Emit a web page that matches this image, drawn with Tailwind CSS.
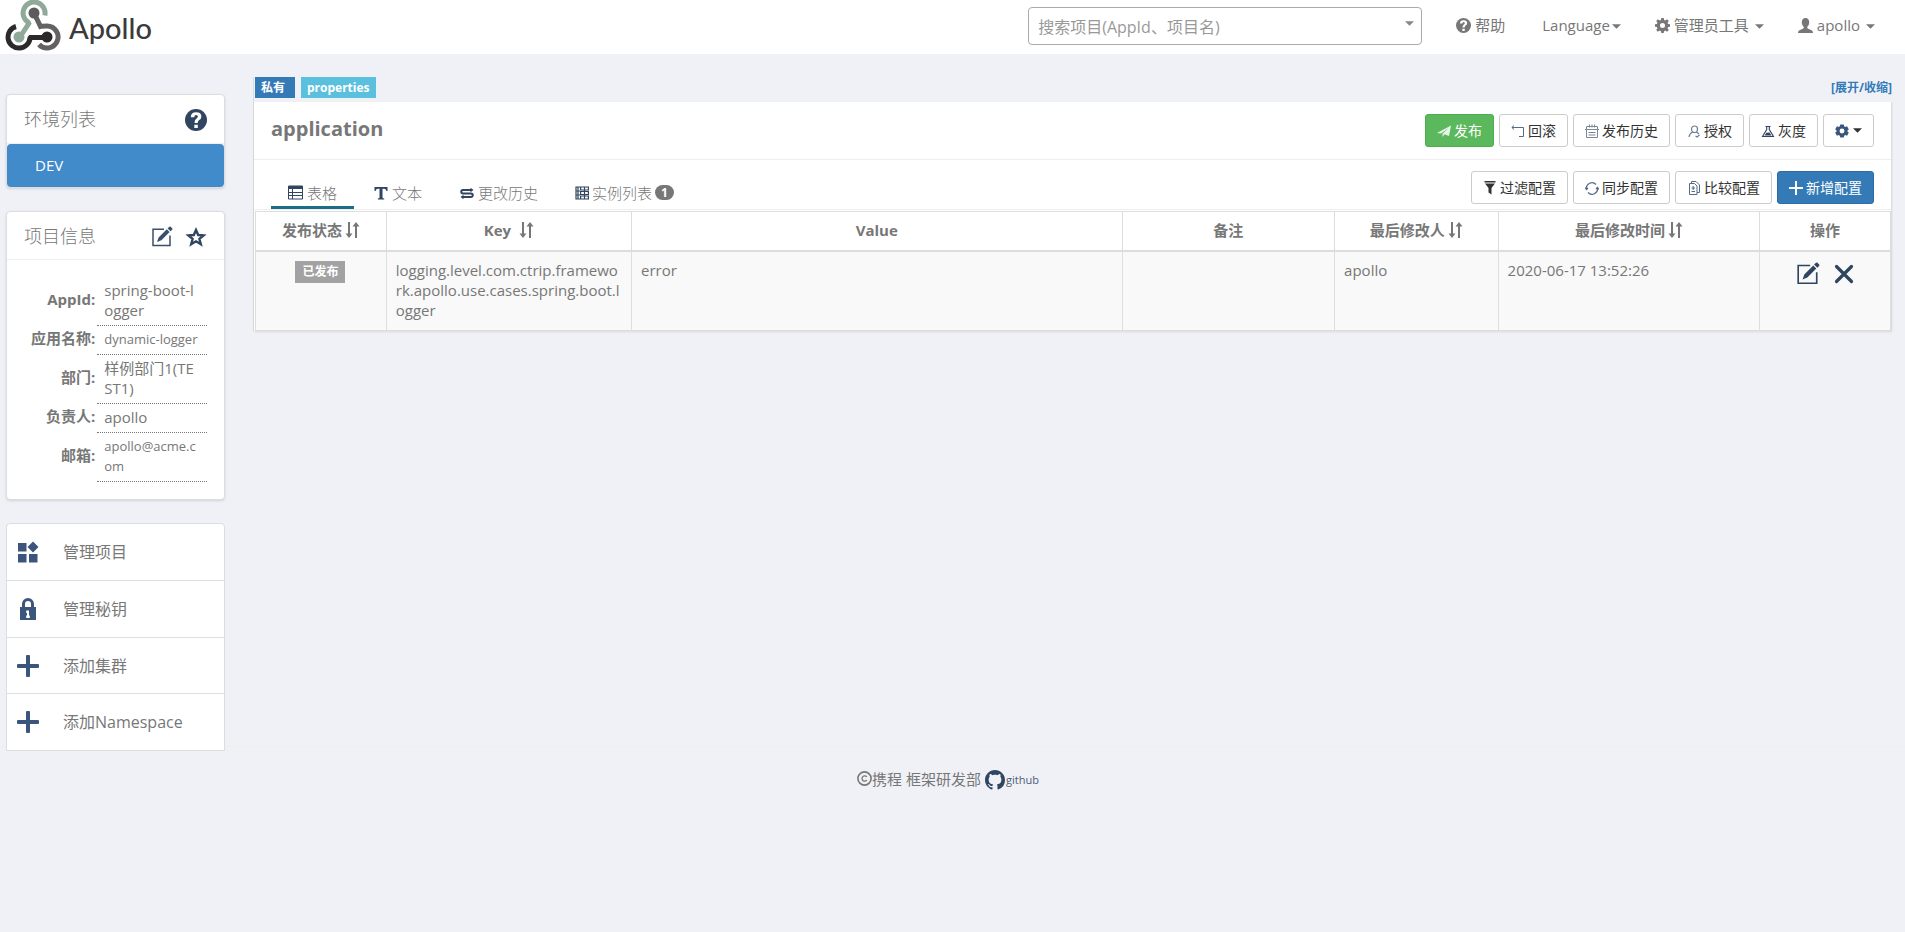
<!DOCTYPE html>
<html lang="zh-CN">
<head>
<meta charset="utf-8">
<meta name="viewport" content="width=device-width, initial-scale=1">
<title>Apollo</title>
<script src="https://cdn.jsdelivr.net/npm/@tailwindcss/browser@4"></script>
</head>
<body class="min-h-screen bg-[#f0f1f7] font-['Open_Sans','Noto_Sans_CJK_SC',sans-serif] text-[15px] leading-5 text-[#777]">

<svg class="hidden" aria-hidden="true">
  <symbol id="edit" viewBox="0 0 22 22"><path d="M13 3.2H2v16.3h17V9.5" fill="none" stroke="currentColor" stroke-width="1.5"/><path d="M6 16l1.6-4.6 8.2-8.2 2.8 2.8-8.2 8.3zM16.600 2.400L18.300 .8q.7-.5 1.400 0l1.500 1.500q.6.7 0 1.400l-1.700 1.600z" fill="currentColor"/></symbol>
  <symbol id="caret" viewBox="0 0 8 4"><path d="M0 0h8L4 4z" fill="currentColor"/></symbol>
  <symbol id="sort" viewBox="0 0 15 16"><path d="M3 0h2v11.500h2.500L4 16 .5 11.500H3zM10 16h2V4.500h2.500L11 0 7.500 4.500H10z" fill="currentColor"/></symbol>
  <symbol id="plus" viewBox="0 0 22 22"><path d="M10 0h2q1 0 1 1v8h8q1 0 1 1v2q0 1-1 1h-8v8q0 1-1 1h-2q-1 0-1-1v-8H1q-1 0-1-1v-2q0-1 1-1h8V1q0-1 1-1z" fill="currentColor"/></symbol>
  <symbol id="gear" viewBox="0 0 16 16"><path fill="currentColor" fill-rule="evenodd" d="M6.700 0h2.600l.4 2.100 1.300.6 1.900-1.300 1.800 1.800-1.300 1.900.6 1.300 2 .3v2.600l-2 .4-.6 1.300 1.300 1.900-1.800 1.800-1.900-1.300-1.300.6-.4 2H6.700l-.4-2-1.300-.6-1.900 1.300-1.800-1.800L2.600 11 2 9.700 0 9.300V6.700l2-.4L2.600 5 1.300 3.200l1.800-1.800L5 2.700l1.300-.6zM8 5.300a2.700 2.700 0 100 5.400 2.700 2.700 0 000-5.400z"/></symbol>
  <symbol id="cog" viewBox="0 0 16 16"><path fill="currentColor" fill-rule="evenodd" d="M6 .5h4l.5 2.200 1.200.7 2.100-.7 2 3.500L14.200 7.500v1l1.600 1.300-2 3.500-2.100-.7-1.200.7-.5 2.200H6l-.5-2.200-1.200-.7-2.100.7-2-3.500 1.600-1.300v-1L.2 6.200l2-3.500 2.100.7 1.200-.7zM8 5.200a2.800 2.800 0 100 5.600 2.800 2.800 0 000-5.600z"/></symbol>
  <symbol id="help" viewBox="0 0 22 22"><circle cx="11" cy="11" r="11" fill="currentColor"/><path d="M5.800 8.200q0-5 5.300-5 5.300 0 5.300 4.300 0 2.300-2.200 3.600-1.500 1-1.500 2.900H9.500q0-3 2-4.400 1.400-.9 1.400-2 0-1.600-1.800-1.600-1.800 0-1.900 2.200zM9.300 15.700h3.500v3.400H9.300z" fill="#fff"/></symbol>
</svg>

<header class="flex h-[54px] items-start justify-between bg-white">
  <a href="#" class="flex items-center pl-[5px] text-[#3c3a3a]">
    <svg class="h-[52px] w-[57px]" viewBox="5 0 57 52" fill="none" stroke-width="5">
      <path d="M16 26.500A11 11 0 1 0 30 38l.5-.6h14" stroke="#2b2929"/>
      <path d="M34 13l6.500 13.500Q42 26 47 26A11 11 0 1 1 39 44.500" stroke="#636161"/>
      <path d="M44.800 15.500A11 11 0 1 0 28.300 22.400l.5 1.200L20 37" stroke="#8faa98"/>
      <circle cx="34" cy="13" r="5.500" fill="#5d5b5b"/><circle cx="19" cy="37" r="5.500" fill="#8faa98"/><circle cx="47" cy="37" r="5.500" fill="#2b2929"/>
    </svg>
    <span class="pt-1 pl-[7px] font-['Lato',sans-serif] text-[29px] leading-9 font-medium">Apollo</span>
  </a>
  <nav class="flex items-start pr-[30px]">
    <div class="relative mt-[7px] mr-[34px]">
      <select aria-label="搜索项目" class="h-[38px] w-[394px] appearance-none rounded border border-[#aaa] bg-white pt-[2px] pl-[9px] text-base text-[#999]"><option>搜索项目(AppId、项目名)</option></select>
      <svg class="pointer-events-none absolute top-[14px] right-2 h-[5px] w-[9px] text-[#888]"><use href="#caret"/></svg>
    </div>
    <ul class="flex items-center gap-[38px] pt-[15px]">
      <li><a href="#" class="flex items-center gap-1"><svg class="size-[15px]"><use href="#help"/></svg>帮助</a></li>
      <li class="-ml-px"><a href="#" class="flex items-center gap-[2px]">Language<svg class="mt-[2px] h-[5px] w-[9px]"><use href="#caret"/></svg></a></li>
      <li class="-ml-1"><a href="#" class="flex items-center gap-1"><svg class="size-[15px]"><use href="#gear"/></svg>管理员工具<svg class="mt-[2px] ml-[2px] h-[5px] w-[9px]"><use href="#caret"/></svg></a></li>
      <li class="-ml-1"><a href="#" class="flex items-center gap-1"><svg class="size-[15px]" viewBox="0 0 15 15" fill="currentColor"><path d="M7.500 0C10 0 11.200 1.800 11.200 4.200c0 2-.8 3.700-1.900 4.600v1.400l4.600 2.300q1.100.6 1.100 2.500H0q0-1.900 1.100-2.500l4.600-2.300V8.800C4.600 7.900 3.800 6.200 3.800 4.200 3.800 1.800 5 0 7.500 0z"/></svg>apollo<svg class="mt-[2px] ml-[2px] h-[5px] w-[9px]"><use href="#caret"/></svg></a></li>
    </ul>
  </nav>
</header>

<div class="flex items-start gap-[28px] pr-[13px] pl-[6px]">
  <aside class="w-[219px] shrink-0 pt-10">
    <section class="rounded border border-[#ddd] bg-white shadow-sm">
      <header class="flex h-[49px] items-center justify-between border-b border-[#eee] px-[17px]">
        <h2 class="text-lg font-light">环境列表</h2>
        <button type="button" aria-label="帮助" class="text-[#30455f]"><svg class="mt-[2px] size-[22px]"><use href="#help"/></svg></button>
      </header>
      <a href="#" class="flex h-[43px] items-center rounded bg-[#428bca] pb-[2px] pl-7 text-white">DEV</a>
    </section>

    <section class="mt-[23px] rounded border border-[#ddd] bg-white shadow-sm">
      <header class="flex h-[48px] items-center border-b border-[#eee] px-[17px]">
        <h2 class="grow text-lg font-light">项目信息</h2>
        <button type="button" aria-label="编辑" class="mr-3 text-[#3a4f6b]"><svg class="mt-[2px] size-[22px]"><use href="#edit"/></svg></button>
        <button type="button" aria-label="收藏" class="text-[#30455f]"><svg class="mt-[2px] size-[22px]" viewBox="0 0 22 22" fill="none" stroke="currentColor" stroke-width="2.400"><path d="M11 4l2.200 5 5.400.4-4.200 3.500 1.400 5.300L11 15.300l-4.800 2.900 1.400-5.300-4.200-3.500L8.800 9z"/></svg></button>
      </header>
      <table class="mx-[17px] mt-[17px] mb-[17px] table-fixed [&_td]:border-b [&_td]:border-dotted [&_td]:border-[#777] [&_td]:px-[7px] [&_td]:pt-[3px] [&_td]:pb-[5px] [&_th]:pr-[2px] [&_th]:pb-1 [&_th]:text-right [&_th]:font-bold">
        <tbody>
          <tr><th class="w-[74px]">AppId:</th><td class="w-[110px] break-all">spring-boot-logger</td></tr>
          <tr><th class="whitespace-nowrap">应用名称:</th><td class="text-[13px] leading-5 whitespace-nowrap">dynamic-logger</td></tr>
          <tr><th>部门:</th><td class="break-all">样例部门1(TEST1)</td></tr>
          <tr><th>负责人:</th><td class="break-all">apollo</td></tr>
          <tr><th>邮箱:</th><td class="text-[13px] leading-5 break-all">apollo@acme.com</td></tr>
        </tbody>
      </table>
    </section>

    <nav class="mt-[23px] divide-y divide-[#ddd] rounded-t border border-[#ddd] bg-white text-base">
      <a href="#" class="flex h-[57px] items-center pl-[10px]"><svg class="mr-[24px] size-[22px] text-[#3a567c]" viewBox="0 0 22 22" fill="currentColor"><path d="M1 2h8.500v8.500H1zM1 13h8.500v8.500H1zM12 13h8.500v8.500H12zM16 .5l5.500 5.500-5.500 5.500L10.500 6z"/></svg>管理项目</a>
      <a href="#" class="flex h-[57px] items-center pl-[10px]"><svg class="mr-[24px] size-[22px] text-[#3a567c]" viewBox="0 0 22 22" fill="currentColor" fill-rule="evenodd"><path d="M5 9V6a6 6 0 0112 0v3h2v13H3V9zm3 0h6V6a3 3 0 00-6 0zm1.200 3.500v2.500h.8v2.500h-.8V20h3.600v-2.500h-.8v-5z"/></svg>管理秘钥</a>
      <a href="#" class="flex h-[56px] items-center pl-[10px]"><svg class="mr-[24px] size-[22px] text-[#3a567c]"><use href="#plus"/></svg>添加集群</a>
      <a href="#" class="flex h-[56px] items-center pl-[10px]"><svg class="mr-[24px] size-[22px] text-[#3a567c]"><use href="#plus"/></svg>添加Namespace</a>
    </nav>
  </aside>

  <main class="min-w-0 grow pt-[23px]">
    <section class="border-l border-[#ddd]">
      <div class="flex h-[25px] items-start gap-[6px] pl-px text-xs font-bold">
        <span class="flex h-[21px] items-center bg-[#337ab7] pr-[10px] pl-[6px] text-white">私有</span>
        <span class="flex h-[21px] items-center bg-[#5bc0de] px-[6px] text-white">properties</span>
        <a href="#" class="ml-auto pt-[3px] text-[#337ab7]">[展开/收缩]</a>
      </div>
      <div class="border-r border-[#ddd] bg-white shadow-[0_1px_2px_rgba(0,0,0,0.1)]">
        <header class="flex h-[58px] items-start justify-between border-b border-[#eee] pt-3 pr-[17px] pl-[17px]">
          <h1 class="pt-px text-xl leading-7 font-bold">application</h1>
          <div class="flex gap-[5px] text-sm text-[#333]">
            <button type="button" class="flex h-[33px] items-center gap-[3px] rounded-[3px] border border-[#4cae4c] bg-[#5cb85c] px-[11px] text-white"><svg class="size-[14px]" viewBox="0 0 14 14" fill="currentColor"><path d="M0 9L14 1.500 12 12 7.500 10.300 5.500 13V9.800L11.500 4 4 9.500z" opacity=".85"/></svg>发布</button>
            <button type="button" class="flex h-[33px] items-center gap-[3px] rounded-[3px] border border-[#ccc] bg-white px-[11px]"><svg class="size-[14px] text-[#556b88]" viewBox="0 0 14 14" fill="none" stroke="currentColor"><path d="M3 1.500L.800 3.500 3 5.500M1 3.500h11.500v9H8"/></svg>回滚</button>
            <button type="button" class="flex h-[33px] items-center gap-[3px] rounded-[3px] border border-[#ccc] bg-white px-[11px]"><svg class="size-[14px] text-[#7b8796]" viewBox="0 0 14 14" fill="none" stroke="currentColor"><path d="M1.500 2.500h11v11h-11zM4.500 .500v3M7 .500v3M9.500 .500v3M0 5.500h14M3.500 8.500h7M3.500 11h7"/></svg>发布历史</button>
            <button type="button" class="flex h-[33px] items-center gap-[3px] rounded-[3px] border border-[#ccc] bg-white px-[11px]"><svg class="size-[14px] text-[#6b7c90]" viewBox="0 0 14 14" fill="none" stroke="currentColor" stroke-width="1.200"><path d="M7.500 2a3 3 0 013 3c0 2-1.200 3.500-3 3.500S4.500 7 4.500 5a3 3 0 013-3zM5.500 8Q2.500 9.500 2 13M9.500 8l2.500 2M8.500 12l1.500 1 2.500-2"/></svg>授权</button>
            <button type="button" class="flex h-[33px] items-center gap-[3px] rounded-[3px] border border-[#ccc] bg-white px-[11px]"><svg class="size-[14px] text-[#30455f]" viewBox="0 0 14 14" fill="none" stroke="currentColor" stroke-width="1.100"><path d="M4.500 2.500h5M5.700 2.500v3L1.500 12.500h11L8.300 5.500v-3"/><path d="M4.500 11l1.500-2 1 .8 1-1 1.500 2.200z" fill="currentColor"/></svg>灰度</button>
            <button type="button" aria-label="设置" class="flex h-[33px] items-center gap-1 rounded-[3px] border border-[#ccc] bg-white px-[11px]"><svg class="size-[14px] text-[#3a567c]"><use href="#cog"/></svg><svg class="h-[5px] w-[9px]"><use href="#caret"/></svg></button>
          </div>
        </header>
        <div class="flex h-[50px] items-end justify-between border-b border-[#eee] pr-[17px] pl-[17px]">
          <div role="tablist" class="flex gap-[2px] font-light">
            <button type="button" role="tab" aria-selected="true" class="flex h-[34px] items-center gap-1 border-b-3 border-[#1a6f85] px-[17px] pt-1"><svg class="size-[15px] text-[#30455f]" viewBox="0 0 15 15" fill="none" stroke="currentColor"><path d="M.5 1h14v13H.500zM4.500 4v10M1 7.500h13M1 10.500h13"/><path d="M1 2.500h13" stroke-width="3"/></svg>表格</button>
            <button type="button" role="tab" class="flex h-[34px] items-center gap-1 border-b-3 border-transparent px-[18px] pt-1"><svg class="size-[14px] text-[#30455f]" viewBox="0 0 14 14" fill="currentColor"><path d="M.5 1h13v4h-1Q12 2.800 10 2.800H8.500v8.700q0 1 1.700 1v1H3.800v-1q1.700 0 1.700-1V2.800H4Q2 2.800 1.500 5h-1z"/></svg>文本</button>
            <button type="button" role="tab" class="flex h-[34px] items-center gap-1 border-b-3 border-transparent px-[18px] pt-1"><svg class="size-[14px] text-[#30455f]" viewBox="0 0 14 14" fill="none" stroke="currentColor" stroke-width="2"><path d="M11 4H3a1.700 1.700 0 000 3.500h8a1.700 1.700 0 010 3.500H3"/><path d="M10.500 1.800l3 2.200-3 2.200zM3.500 8.800L.5 11l3 2.200z" fill="currentColor" stroke="none"/></svg>更改历史</button>
            <button type="button" role="tab" class="flex h-[34px] items-center gap-[3px] border-b-3 border-transparent px-[17px] pt-1"><svg class="size-[14px] text-[#30455f]" viewBox="0 0 14 14" fill="none" stroke="currentColor" stroke-width="1.200"><path d="M5.600 1h7.800v3H5.600zM5.600 5.500h7.800v3H5.600zM5.600 10h7.800v3H5.600zM9.500 1v12M5 1H1v12h4M1 5h4M1 9h4M3 1v12"/></svg>实例列表<span class="flex h-[15px] items-center rounded-full bg-[#777] px-[6px] text-xs leading-none font-bold text-white">1</span></button>
          </div>
          <div class="flex gap-[5px] pb-[5px] text-sm text-[#333]">
            <button type="button" class="flex h-[33px] items-center gap-[3px] rounded-[3px] border border-[#ccc] bg-white px-[11px]"><svg class="size-[14px]" viewBox="0 0 14 14" fill="currentColor"><path d="M1.500 0h11v1.500h-11zM2 2.500h10L8.500 7v6.500l-3-2V7z"/></svg>过滤配置</button>
            <button type="button" class="flex h-[33px] items-center gap-[3px] rounded-[3px] border border-[#ccc] bg-white px-[11px]"><svg class="size-[14px] text-[#556b88]" viewBox="0 0 14 14" fill="none" stroke="currentColor" stroke-width="1.200"><path d="M1.500 8A5.500 5.500 0 0111 3.500M12.500 7A5.500 5.500 0 013 11.500M0 6.500L1.500 8.500 3 7M11 8l1.500-1.500L14 8.500"/></svg>同步配置</button>
            <button type="button" class="flex h-[33px] items-center gap-[3px] rounded-[3px] border border-[#ccc] bg-white px-[11px]"><svg class="size-[14px] text-[#556b88]" viewBox="0 0 14 14" fill="none" stroke="currentColor"><path d="M2.500 2.500h5l2.500 2.500v8.500H2.500zM4.500 2.500v-2H9L12.500 4v7.500H10M6.200 5v4M4.500 7h3.500M4.500 10.500h3.500"/></svg>比较配置</button>
            <button type="button" class="flex h-[33px] items-center gap-[3px] rounded-[3px] border border-[#2e6da4] bg-[#337ab7] px-[11px] text-white"><svg class="size-[14px]" viewBox="0 0 14 14" stroke="currentColor" stroke-width="2"><path d="M7 0v14M0 7h14"/></svg>新增配置</button>
          </div>
        </div>
        <div class="pt-px pl-px">
          <table class="w-full table-fixed border-collapse border border-[#ddd] [&_td]:border [&_td]:border-[#ddd] [&_td]:pt-2 [&_td]:pr-[10px] [&_td]:pb-[10px] [&_td]:pl-[9px] [&_td]:align-top [&_th]:border [&_th]:border-b-2 [&_th]:border-[#ddd] [&_th]:pb-[2px] [&_th]:font-bold">
            <thead>
              <tr class="h-[39px]">
                <th class="w-[8%]">发布状态<svg class="ml-[3px] inline h-4 w-[15px] align-[-2px]"><use href="#sort"/></svg></th>
                <th class="w-[15%]">Key<svg class="ml-2 inline h-4 w-[15px] align-[-2px]"><use href="#sort"/></svg></th>
                <th class="w-[30%]">Value</th>
                <th class="w-[13%]">备注</th>
                <th class="w-[10%]">最后修改人<svg class="ml-[3px] inline h-4 w-[15px] align-[-2px]"><use href="#sort"/></svg></th>
                <th class="w-[16%]">最后修改时间<svg class="ml-[3px] inline h-4 w-[15px] align-[-2px]"><use href="#sort"/></svg></th>
                <th class="w-[8%]">操作</th>
              </tr>
            </thead>
            <tbody>
              <tr class="bg-[#f9f9f9]">
                <td class="text-center"><span class="inline-flex h-[22px] items-center bg-[#a2a2a2] px-[7px] text-xs font-bold text-white">已发布</span></td>
                <td class="break-all">logging.level.com.ctrip.framework.apollo.use.cases.spring.boot.logger</td>
                <td>error</td>
                <td></td>
                <td>apollo</td>
                <td>2020-06-17 13:52:26</td>
                <td><div class="flex items-center justify-center gap-[14px] pt-[2px] text-[#30455f]"><button type="button" aria-label="修改"><svg class="block size-[24px]"><use href="#edit"/></svg></button><button type="button" aria-label="删除"><svg class="block size-[20px]" viewBox="0 0 20 20" stroke="currentColor" stroke-width="3.200" stroke-linecap="round"><path d="M2.500 2.500l15 15M17.500 2.500l-15 15"/></svg></button></div></td>
              </tr>
            </tbody>
          </table>
        </div>
      </div>
    </section>
  </main>
</div>

<footer class="-mt-[5px] flex items-center justify-center border-t border-[#eee] pt-5 pr-[9px]">
  <svg class="size-[15px]" viewBox="0 0 15 15" fill="none" stroke="currentColor" stroke-width="1.600"><circle cx="7.500" cy="7.500" r="6.600"/><path d="M9.800 5.800A2.700 2.700 0 107.500 10.200q1.500 0 2.300-1.100" stroke-width="1.300"/></svg>
  <span>携程 框架研发部</span>
  <a href="#" class="mt-[3px] ml-1 flex items-center gap-px text-[11px] text-[#4a5d75]"><svg class="size-5 text-[#30455f]" viewBox="0 0 16 16" fill="currentColor"><path d="M8 0C3.580 0 0 3.580 0 8c0 3.540 2.290 6.530 5.470 7.590.4.070.55-.17.55-.38 0-.19-.01-.82-.01-1.490-2.010.37-2.530-.49-2.690-.94-.09-.23-.48-.94-.82-1.130-.28-.15-.68-.52-.01-.53.63-.01 1.080.58 1.230.82.720 1.210 1.870.87 2.330.66.070-.52.280-.87.510-1.070-1.780-.2-3.640-.89-3.640-3.950 0-.87.310-1.590.82-2.150-.08-.2-.36-1.020.08-2.120 0 0 .67-.21 2.200.82.640-.18 1.320-.27 2-.27s1.360.09 2 .27c1.530-1.040 2.200-.82 2.200-.82.440 1.100.16 1.920.08 2.120.510.560.82 1.270.82 2.150 0 3.070-1.870 3.750-3.650 3.950.290.250.540.730.540 1.480 0 1.070-.01 1.930-.01 2.200 0 .21.150.46.550.38A8.010 8.010 0 0016 8c0-4.420-3.580-8-8-8z"/></svg><span>github</span></a>
</footer>
</body>
</html>
